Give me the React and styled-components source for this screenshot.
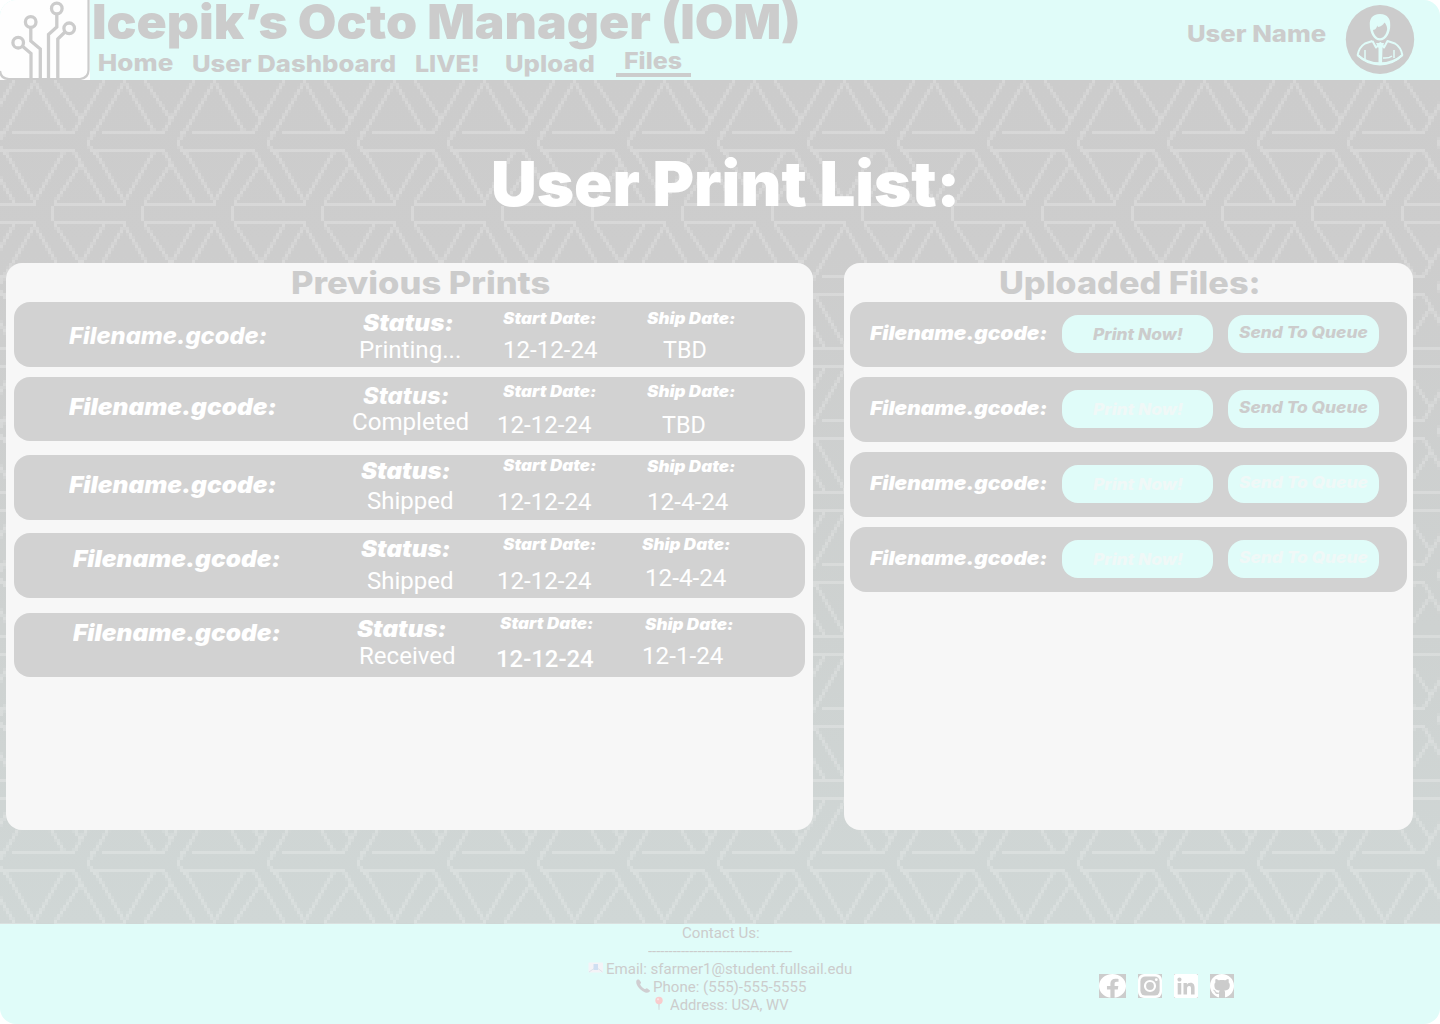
import React, { useLayoutEffect, useRef, useState } from "react";
import styled, { createGlobalStyle, css } from "styled-components";
import { FaFacebook, FaLinkedin, FaGithub } from "react-icons/fa";

const grey = "#cccccc";
const mint = "#e0fcf9";
const faint = "#f0f8f7";

const GlobalStyle = createGlobalStyle`
  * { box-sizing: border-box; }
  body { margin: 0; background: #fff; font-family: Inter, "Liberation Sans", sans-serif; }
`;

/* ---------- text fitted to a given drawn width ---------- */

const TextBox = styled.span`
  display: block;
  flex: none;
  width: ${(p) => p.$w}px;
  height: ${(p) => p.$lh}px;
  line-height: ${(p) => p.$lh}px;
  font-family: ${(p) => (p.$roboto ? "Roboto" : "Inter")}, "Liberation Sans", sans-serif;
  font-size: ${(p) => p.$size}px;
  font-weight: ${(p) => p.$weight};
  font-style: ${(p) => (p.$italic ? "italic" : "normal")};
  color: ${(p) => p.$color};
  margin: ${(p) => p.$top}px 0 0 ${(p) => p.$left}px;
  text-align: left;
  white-space: nowrap;
`;

const TextInner = styled.span`
  display: inline-block;
  transform-origin: 0 50%;
`;

function FitText({ w, lh = 24, size = 23, weight = 900, italic, roboto, color = grey, top = 0, left = 0, children }) {
  const ref = useRef(null);
  const [fit, setFit] = useState({ scale: 1, shift: 0 });
  useLayoutEffect(() => {
    const s = getComputedStyle(ref.current);
    const ctx = document.createElement("canvas").getContext("2d");
    ctx.font = `${s.fontStyle} ${s.fontWeight} ${s.fontSize} ${s.fontFamily}`;
    const m = ctx.measureText(children);
    const ink = m.actualBoundingBoxLeft + m.actualBoundingBoxRight;
    const scale = w / ink;
    setFit({ scale, shift: m.actualBoundingBoxLeft * scale });
  }, [children, w]);
  return (
    <TextBox $w={w} $lh={lh} $size={size} $weight={weight} $italic={italic} $roboto={roboto} $color={color} $top={top} $left={left}>
      <TextInner ref={ref} style={{ transform: `translateX(${fit.shift}px) scaleX(${fit.scale})` }}>
        {children}
      </TextInner>
    </TextBox>
  );
}

/* ---------- page ---------- */

const Page = styled.div`
  position: relative;
  width: 1440px;
  height: 1024px;
  display: flex;
  flex-direction: column;
  overflow: hidden;
  border-radius: 16px;
`;

const Header = styled.header`
  height: 80px;
  display: flex;
  background: ${mint};
`;

const Logo = styled.svg`
  flex: none;
  width: 90px;
  height: 80px;
`;

const Brand = styled.div`
  flex: 1;
  display: flex;
  flex-direction: column;
`;

const Nav = styled.nav`
  display: flex;
  height: 34px;
`;

const ActiveLink = styled.div`
  margin: 3px 0 0 22px;
  width: 75px;
  height: 30px;
  border-bottom: 4px solid ${grey};
`;

const Account = styled.div`
  display: flex;
  width: 253px;
`;

const Avatar = styled.svg`
  flex: none;
  width: 70px;
  height: 70px;
  margin: 5px 0 0 18px;
`;

const Main = styled.main`
  position: relative;
  height: 844px;
  background: linear-gradient(#cccccc 0, #cdcdcd 20%, #ced2d1 65%, #d0d7d6 100%);
`;

const Backdrop = styled.svg`
  position: absolute;
  inset: 0;
  width: 1440px;
  height: 844px;
`;

const Content = styled.div`
  position: relative;
  display: flex;
  flex-direction: column;
`;

const TitleBar = styled.div`
  height: 183px;
  display: flex;
`;

const Panels = styled.div`
  display: flex;
  gap: 31px;
  padding-left: 6px;
`;

const Panel = styled.section`
  width: ${(p) => p.$w}px;
  height: 567px;
  border-radius: 16px;
  background: #f7f7f7;
  padding: 0 ${(p) => p.$pad}px;
`;

const PanelHead = styled.div`
  display: flex;
  height: 39px;
`;

const rowBase = css`
  display: flex;
  height: ${(p) => p.$h}px;
  border-radius: 16px;
  background: #d2d2d2;
  margin-bottom: ${(p) => p.$gap}px;
`;

const PrintRow = styled.div`
  ${rowBase}
`;

const Field = styled.div`
  flex: none;
  width: ${(p) => p.$w}px;
`;

const FileRow = styled.div`
  ${rowBase}
  padding: 13px 28px 0 20px;
`;

const PillButton = styled.button`
  display: flex;
  width: 151px;
  height: 38px;
  padding: 0;
  border: 0;
  border-radius: 16px;
  background: ${mint};
  margin-left: 15px;
`;

const Footer = styled.footer`
  height: 100px;
  background: ${mint};
  display: grid;
  grid-template-columns: 1fr 340px 1fr;
`;

const Contact = styled.div`
  grid-column: 2;
  display: flex;
  flex-direction: column;
  align-items: center;
`;

const ContactLine = styled.div`
  display: flex;
  height: 18px;
`;

const Emoji = styled.svg`
  width: 16px;
  height: 16px;
  margin-right: 3px;
`;

const Socials = styled.div`
  display: flex;
  gap: 12px;
  padding: 50px 0 0 209px;
`;

const SocialTile = styled.a`
  display: block;
  width: ${(p) => p.$w}px;
  height: 24px;
  background: ${grey};
  color: #fff;
  svg { display: block; width: 100%; height: 24px; }
`;

/* ---------- backdrop: a 30 x 48 cell tile, three pixels per cell ---------- */

const strokes = [
  [4, 17, 23, 17], [0, 17, 1, 17],
  [0, 23, 23, 23],
  [18, 41, 29, 41], [0, 41, 11, 41],
  [18, 47, 29, 47], [0, 47, 11, 47],
  [11, 0, 1, 17], [11, 0, 21, 17],
  [18, 0, 26, 12], [34, 0, 24, 17],
  [31, 17, 29, 20], [29, 20, 29, 21], [29, 21, 31, 24],
  [1, 23, 11, 40], [21, 23, 11, 40],
  [24, 23, 34, 40], [26, 28, 18, 40],
  [17, 42, 17, 46],
];

const cells = new Map();
function plot(x, y, level) {
  if (level < 0.12) return;
  const key = `${((x % 30) + 30) % 30},${y}`;
  cells.set(key, Math.max(cells.get(key) || 0, level));
}
strokes.forEach(([x0, y0, x1, y1]) => {
  if (y0 === y1) {
    for (let x = x0; x <= x1; x++) plot(x, y0, 1);
    return;
  }
  for (let y = y0; y <= y1; y++) {
    const x = x0 + ((x1 - x0) * (y - y0)) / (y1 - y0);
    const left = Math.floor(x);
    const part = x - left;
    plot(left, y, Math.min(1, (1 - part) * 1.25));
    plot(left + 1, y, Math.min(1, part * 1.25));
  }
});
const tileCells = [...cells].map(([key, level]) => {
  const [x, y] = key.split(",").map(Number);
  return { x: x * 3, y: y * 3, level };
});

function Pattern() {
  return (
    <Backdrop>
      <defs>
        <pattern id="weave" width="90" height="144" patternUnits="userSpaceOnUse">
          {tileCells.map((c) => (
            <rect key={`${c.x}-${c.y}`} x={c.x} y={c.y} width="3" height="3" fill="#fff" fillOpacity={c.level * 0.22} />
          ))}
        </pattern>
      </defs>
      <rect width="1440" height="844" fill="url(#weave)" />
    </Backdrop>
  );
}

function CircuitLogo() {
  return (
    <Logo viewBox="0 0 90 80">
      <rect width="90" height="80" fill={mint} />
      <path d="M0 12Q1 1 12 0H90V80H0Z" fill="#fefefe" />
      <path d="M0 71Q1 79 9 79H80Q88.500 78 88.500 70V0" fill="none" stroke={grey} strokeWidth="2.200" />
      <g fill="none" stroke={grey} strokeWidth="3.300">
        <circle cx="18.200" cy="42.700" r="5.300" />
        <circle cx="30.700" cy="22" r="5.300" />
        <circle cx="56.800" cy="8.500" r="5.300" />
        <circle cx="69.200" cy="28.300" r="5.300" />
        <path d="M22.500 46.300L31 53.500V80M30.800 27.500V41L40.300 49V80M56.800 14V27L48.500 34.500V80M65 32L57.800 39V80" />
      </g>
    </Logo>
  );
}

function UserAvatar() {
  return (
    <Avatar viewBox="0 0 70 70">
      <ellipse cx="35" cy="34.500" rx="34.200" ry="34.500" fill={grey} />
      <path fill={mint} d="M35 9C27 9 24.500 14 24.800 20C24.700 28 29 35.500 35 35.500C41 35.500 45.500 28 45.200 20C45.500 14 43 9.500 35 9Z" />
      <path fill={grey} d="M28 25C31 25 32 22 32.200 20.500L33 22C36 21.500 38 20 39.500 17.500C41 19 42 21 42.200 24C41.500 29 38.500 33.300 35 33.300C31.500 33.300 28.800 29.500 28 25Z" />
      <path fill="none" stroke={mint} strokeWidth="2" strokeLinejoin="round" d="M27.500 36L20 38.500C16 41 13.500 45 12.700 50C25 62.500 45 62.500 57.300 50C56.500 45 54 41 50 38.500L42.500 36L39 42.500L35.500 38L31 42.500L27.500 36" />
      <path fill={mint} d="M31 38H39L37.500 43L37 58H33.500L33.500 43Z" />
      <path fill="none" stroke={mint} strokeWidth="1.500" d="M20 45V54M49 45V53M38 53Q44 53.500 47 51" />
      <path fill="none" stroke={mint} strokeWidth="2.200" d="M13 50.500C25 61 45 61 57 50.500" />
    </Avatar>
  );
}

/* ---------- data: x positions and vertical centres per field ---------- */

const prints = [
  { y: 302, h: 65, gap: 10, file: [68.5, 335.8, 197, 800], status: [362, 323, 91, 900], state: ["Printing...", 360, 350, 100], start: [501.5, 318.7], startVal: [505, 350, 92], ship: [646, 318.7], shipVal: ["TBD", 663, 350, 43] },
  { y: 377, h: 64, gap: 14, file: [69.3, 406.5, 207, 900], status: [363, 395.7, 85, 800], state: ["Completed", 353, 421.7, 114.5], start: [501.5, 391.7], startVal: [499, 425, 92], ship: [646, 391.7], shipVal: ["TBD", 661.5, 425, 43] },
  { y: 455, h: 65, gap: 13, file: [69.3, 484.5, 207, 900], status: [360, 471, 90, 900], state: ["Shipped", 367.3, 500.7, 85], start: [501.5, 465.8], startVal: [499, 501.7, 92], ship: [646, 466.6], shipVal: ["12-4-24", 649, 501.7, 79] },
  { y: 533, h: 65, gap: 15, file: [72.6, 558.5, 207, 900], status: [360, 549, 90, 900], state: ["Shipped", 367.3, 580.7, 85], start: [501.5, 544.7], startVal: [499, 580.7, 92], ship: [641, 544.7], shipVal: ["12-4-24", 646.5, 577.7, 79] },
  { y: 613, h: 64, gap: 0, file: [72.6, 632.5, 207, 900], status: [356, 628.7, 90, 900], state: ["Received", 360.3, 656, 94], start: [499, 623.7], startVal: [497.5, 659, 96, 500], ship: [643.5, 624.7], shipVal: ["12-1-24", 643.8, 656, 79] },
];

const files = [
  { print: true, queue: true },
  { print: false, queue: true },
  { print: false, queue: false },
  { print: false, queue: false },
];

function LabelledField({ origin, width, rowTop, label, value }) {
  return (
    <Field $w={width}>
      <FitText italic color="#fff" w={label.w} size={label.size} weight={label.weight} left={label.x - origin} top={label.c - 12 - rowTop}>
        {label.text}
      </FitText>
      <FitText roboto color="#fff" size={24} w={value.w} weight={value.weight || 400} left={value.x - origin} top={value.c - label.c - 24}>
        {value.text}
      </FitText>
    </Field>
  );
}

export default function App() {
  return (
    <>
      <GlobalStyle />
      <Page>
        <Header>
          <CircuitLogo />
          <Brand>
            <FitText w={704} lh={44} size={47.500} left={4}>Icepik’s Octo Manager (IOM)</FitText>
            <Nav>
              <FitText w={74.500} left={9} top={7} weight={800}>Home</FitText>
              <FitText w={202.500} left={19.500} top={8} weight={800}>User Dashboard</FitText>
              <FitText w={62.500} left={20.500} top={8} weight={800}>LIVE!</FitText>
              <FitText w={88} left={27.500} top={8} weight={800}>Upload</FitText>
              <ActiveLink>
                <FitText w={57} left={9} top={2} weight={800}>Files</FitText>
              </ActiveLink>
            </Nav>
          </Brand>
          <Account>
            <FitText w={138.500} left={1} top={21.600} weight={800}>User Name</FitText>
            <UserAvatar />
          </Account>
        </Header>

        <Main>
          <Pattern />
          <Content>
            <TitleBar>
              <FitText w={462} lh={60} size={62} color="#fff" left={493} top={73.500}>User Print List:</FitText>
            </TitleBar>
            <Panels>
              <Panel $w={807} $pad={8}>
                <PanelHead>
                  <FitText w={257.500} lh={30} size={31} weight={800} left={277.500} top={5}>Previous Prints</FitText>
                </PanelHead>
                {prints.map((r) => (
                  <PrintRow key={r.y} $h={r.h} $gap={r.gap}>
                    <Field $w={336}>
                      <FitText italic color="#fff" w={r.file[2]} weight={r.file[3]} left={r.file[0] - 14} top={r.file[1] - 12 - r.y}>
                        Filename.gcode:
                      </FitText>
                    </Field>
                    <LabelledField origin={350} width={140} rowTop={r.y}
                      label={{ text: "Status:", x: r.status[0], c: r.status[1], w: r.status[2], weight: r.status[3], size: 23 }}
                      value={{ text: r.state[0], x: r.state[1], c: r.state[2], w: r.state[3] }} />
                    <LabelledField origin={490} width={145} rowTop={r.y}
                      label={{ text: "Start Date:", x: r.start[0], c: r.start[1], w: 93.500, weight: 900, size: 15.500 }}
                      value={{ text: "12-12-24", x: r.startVal[0], c: r.startVal[1], w: r.startVal[2], weight: r.startVal[3] }} />
                    <LabelledField origin={635} width={150} rowTop={r.y}
                      label={{ text: "Ship Date:", x: r.ship[0], c: r.ship[1], w: 88.500, weight: 900, size: 15.500 }}
                      value={{ text: r.shipVal[0], x: r.shipVal[1], c: r.shipVal[2], w: r.shipVal[3] }} />
                  </PrintRow>
                ))}
              </Panel>

              <Panel $w={569} $pad={6}>
                <PanelHead>
                  <FitText w={258.500} lh={30} size={31} weight={800} left={149.500} top={5}>Uploaded Files:</FitText>
                </PanelHead>
                {files.map((f, i) => (
                  <FileRow key={i} $h={65} $gap={10}>
                    <FitText italic color="#fff" w={177} size={19.300} top={6.300}>Filename.gcode:</FitText>
                    <PillButton>
                      <FitText italic w={90.500} size={15.500} left={30.500} top={7.500} weight={800} color={f.print ? grey : faint}>Print Now!</FitText>
                    </PillButton>
                    <PillButton>
                      <FitText italic w={128.500} size={15.500} left={11} top={5.700} weight={800} color={f.queue ? grey : faint}>Send To Queue</FitText>
                    </PillButton>
                  </FileRow>
                ))}
              </Panel>
            </Panels>
          </Content>
        </Main>

        <Footer>
          <Contact>
            <ContactLine>
              <FitText roboto weight={400} size={15} lh={18} w={77}>Contact Us:</FitText>
            </ContactLine>
            <ContactLine>
              <FitText roboto weight={400} size={15} lh={18} w={144}>-----------------------------------</FitText>
            </ContactLine>
            <ContactLine>
              <Emoji viewBox="0 0 16 16">
                <rect x="0.500" y="2.500" width="14.500" height="10" rx="1" fill="#f4f3f7" />
                <path d="M1 12L6 8.500M14.500 12L10 8.500" stroke="#dfe4ec" fill="none" />
                <rect x="5.500" y="4" width="4.500" height="6" fill="#cfdff2" />
              </Emoji>
              <FitText roboto weight={400} size={15} lh={18} w={245}>Email: sfarmer1@student.fullsail.edu</FitText>
            </ContactLine>
            <ContactLine>
              <Emoji viewBox="0 0 16 16">
                <path d="M2.500 1.500C1 2 .8 4.500 2 7C4 11 8 14 11.500 14.800C13.500 15 15.300 13.500 15 12.500L12 10.300C11 10 10.500 11.500 9.500 11C7.500 10 6 8 5.200 6.500C5 5.500 6.300 5.200 6 4.200L4 1.500Z" fill="#d0ced1" />
              </Emoji>
              <FitText roboto weight={400} size={15} lh={18} w={152}>Phone: (555)-555-5555</FitText>
            </ContactLine>
            <ContactLine>
              <Emoji viewBox="0 0 16 16">
                <path d="M7.300 7H8.700L8.300 14H7.700Z" fill="#ccd3d6" />
                <circle cx="8" cy="4.500" r="3.700" fill="#f8cccd" />
                <circle cx="7" cy="3.300" r="1.100" fill="#fbe3e4" />
              </Emoji>
              <FitText roboto weight={400} size={15} lh={18} w={119}>Address: USA, WV</FitText>
            </ContactLine>
          </Contact>
          <Socials>
            <SocialTile $w={27}><FaFacebook preserveAspectRatio="none" viewBox="8 8 496 496" /></SocialTile>
            <SocialTile $w={24}>
              <svg viewBox="0 0 24 24">
                <rect width="24" height="24" rx="6" fill="#fff" />
                <rect x="2.400" y="2.400" width="19.200" height="19.200" rx="5" fill={grey} />
                <circle cx="12" cy="12" r="5" fill="none" stroke="#fff" strokeWidth="2.200" />
                <circle cx="18.300" cy="5.700" r="1.400" fill="#fff" />
              </svg>
            </SocialTile>
            <SocialTile $w={24}><FaLinkedin viewBox="0 32 448 448" /></SocialTile>
            <SocialTile $w={24}><FaGithub preserveAspectRatio="none" viewBox="0 8 496 496" /></SocialTile>
          </Socials>
        </Footer>
      </Page>
    </>
  );
}
